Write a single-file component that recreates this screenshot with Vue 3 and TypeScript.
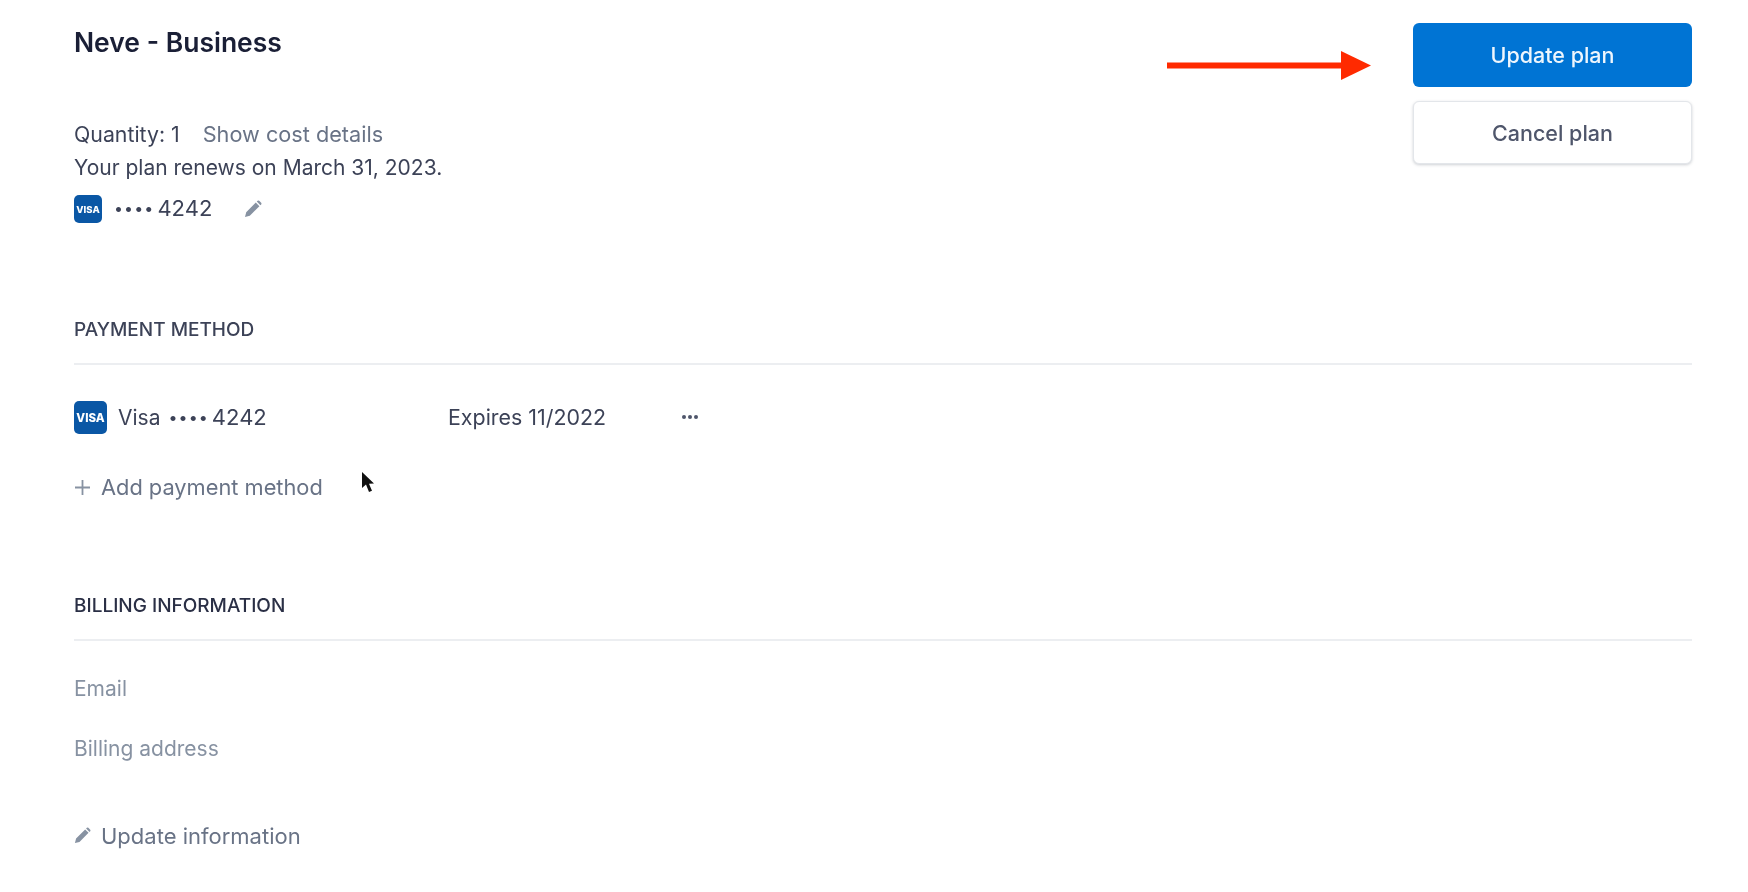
<script setup lang="ts">
const cardEnd = '4242'
const cardDots = '••••'
</script>

<template>
  <main class="page">
    <svg class="arrow" width="205" height="30" viewBox="1 0 205 30" aria-hidden="true">
      <rect x="1" y="12.5" width="176" height="6" fill="#ff2a00" />
      <path d="M175 1 L205 15.5 L175 30 Z" fill="#ff2a00" />
    </svg>

    <section class="plan">
      <div class="plan-info">
        <h1 class="title">Neve - Business</h1>
        <div class="line qty">
          <span class="qty-label">Quantity: 1</span>
          <span class="muted">Show cost details</span>
        </div>
        <div class="line">Your plan renews on March 31, 2023.</div>
        <div class="line card-line">
          <svg class="visa small" viewBox="0 0 28 28">
            <rect width="28" height="28" rx="5" fill="#0a57a5" />
            <text x="14" y="17.5" text-anchor="middle" class="visa-text">VISA</text>
          </svg>
          <span class="dots first">{{ cardDots }}</span>
          <span class="digits">{{ cardEnd }}</span>
          <svg class="pencil" width="18" height="18" viewBox="0 0 18 18">
            <path d="M1 17 L2.2 12.2 L11.8 2.6 L15.4 6.2 L5.8 15.8 Z M12.8 1.6 L13.6 0.8 Q14.4 0.2 15.2 0.8 L17.2 2.8 Q17.8 3.6 17.2 4.4 L16.4 5.2 Z" fill="#8792a2" />
          </svg>
        </div>
      </div>
      <div class="actions">
        <button class="btn primary" type="button">Update plan</button>
        <button class="btn secondary" type="button">Cancel plan</button>
      </div>
    </section>

    <section class="payment">
      <h2 class="heading">PAYMENT METHOD</h2>
      <div class="method">
        <div class="method-name">
          <svg class="visa large" viewBox="0 0 33 33">
            <rect width="33" height="33" rx="5" fill="#0a57a5" />
            <text x="16.5" y="20.5" text-anchor="middle" class="visa-text big">VISA</text>
          </svg>
          <span>Visa</span>
          <span class="dots">{{ cardDots }}</span>
          <span class="digits">{{ cardEnd }}</span>
        </div>
        <span class="expires">Expires 11/2022</span>
        <svg class="more" width="18" height="6" viewBox="0 0 18 6">
          <circle cx="3" cy="3" r="2" fill="#4f566b" />
          <circle cx="9" cy="3" r="2" fill="#4f566b" />
          <circle cx="15" cy="3" r="2" fill="#4f566b" />
        </svg>
      </div>
      <div class="link add">
        <svg width="17" height="17" viewBox="0 0 17 17">
          <path d="M8.5 1 V16 M1 8.5 H16" stroke="#8792a2" stroke-width="1.8" fill="none" />
        </svg>
        <span>Add payment method</span>
        <svg class="cursor" width="16" height="24" viewBox="0 0 16 24">
          <path d="M1 1 L1 17 L5 13.5 L8 21 L11 19.8 L8 12.8 L13 12.5 Z" fill="#111" />
        </svg>
      </div>
    </section>

    <section class="billing">
      <h2 class="heading dark">BILLING INFORMATION</h2>
      <div class="field email">Email</div>
      <div class="field address">Billing address</div>
      <div class="link update">
        <svg width="17" height="17" viewBox="0 0 18 18">
          <path d="M1 17 L2.2 12.2 L11.8 2.6 L15.4 6.2 L5.8 15.8 Z M12.8 1.6 L13.6 0.8 Q14.4 0.2 15.2 0.8 L17.2 2.8 Q17.8 3.6 17.2 4.4 L16.4 5.2 Z" fill="#8792a2" />
        </svg>
        <span>Update information</span>
      </div>
    </section>
  </main>
</template>

<style>
html, body { background: #fff; }
</style>

<style scoped>
.page {
  position: relative;
  box-sizing: border-box;
  width: 1748px;
  height: 892px;
  overflow: hidden;
  padding: 23px 56px 0 74px;
  font-family: Inter, "Liberation Sans", sans-serif;
  font-size: 21px;
  color: #3c4257;
  background: #fff;
  filter: blur(0.35px);
}
.arrow { position: absolute; left: 1167px; top: 50px; }
.plan { display: flex; justify-content: space-between; align-items: flex-start; }
.title {
  margin: 0 0 57px;
  font-size: 26.5px;
  line-height: 38px;
  font-weight: 600;
  color: #1a1f36;
}
.line { line-height: 33px; }
.qty { display: flex; gap: 23px; }
.qty-label { font-size: 21.3px; }
.muted { font-size: 21.7px; color: #697386; }
.card-line { display: flex; align-items: center; margin-top: 9.5px; height: 30px; }
.visa { display: block; flex: none; }
.visa.small { width: 28px; height: 28px; }
.visa.large { width: 33px; height: 33px; }
.visa-text { font: 800 9.5px Inter, "Liberation Sans", sans-serif; fill: #fff; }
.visa-text.big { font-size: 11.5px; }
.dots { font-size: 16px; letter-spacing: 1.1px; margin: 0 3px 0 8px; }
.dots.first { margin-left: 12px; }
.digits { font-size: 22px; }
.pencil { margin-left: 32px; }
.actions { display: flex; flex-direction: column; gap: 14px; }
.btn {
  width: 279px;
  height: 64px;
  border-radius: 6px;
  font: 500 21.5px Inter, "Liberation Sans", sans-serif;
}
.primary { background: #0074d4; border: 0; color: #eef6fd; }
.secondary {
  height: 63px;
  background: #fff;
  border: 1px solid #e3e6ea;
  color: #4f566b;
  box-shadow: 0 1px 3px rgba(60, 66, 87, 0.25);
}
.payment { margin-top: 95px; }
.heading {
  margin: 0;
  padding-bottom: 22px;
  border-bottom: 2px solid #eceef1;
  font-size: 19px;
  line-height: 22px;
  font-weight: 500;
  color: #3c4257;
}
.heading.dark { color: #2a2f45; }
.method { display: flex; align-items: center; margin-top: 36px; height: 33px; }
.method-name { display: flex; align-items: center; width: 374px; }
.method-name .visa { margin-right: 11px; }
.expires { font-size: 21.4px; }
.more { margin-left: 75px; }
.link { display: flex; align-items: center; gap: 10px; color: #697386; font-size: 21.8px; }
.add { position: relative; margin-top: 37px; height: 33px; }
.cursor { position: absolute; left: 287px; top: 0; }
.billing { margin-top: 91px; }
.field { color: #8792a2; line-height: 30px; }
.email { margin-top: 33px; }
.address { margin-top: 30px; }
.update { margin-top: 57px; height: 30px; font-size: 22px; }
</style>
